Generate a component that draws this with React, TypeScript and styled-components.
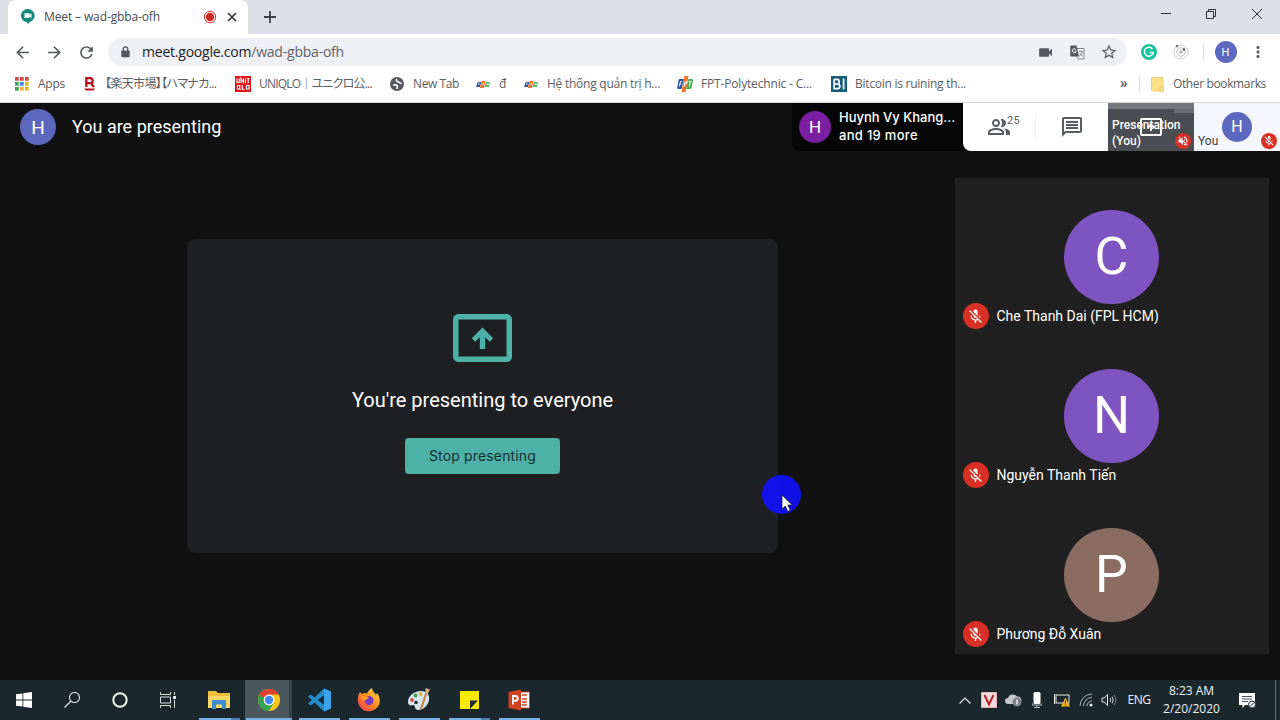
import React from 'react';
import styled, { createGlobalStyle } from 'styled-components';
import { MdOutlinePeopleAlt, MdOutlineMessage, MdMicOff, MdVolumeOff, MdVideocam, MdStarBorder, MdArrowBack, MdArrowForward, MdRefresh, MdMoreVert } from 'react-icons/md';

const Global = createGlobalStyle`
  * { box-sizing: border-box; }
  body { margin: 0; background: #111; overflow: hidden; }
  svg { display: block; flex: none; }
`;

const segoe = `"Open Sans", "Noto Sans", "Noto Sans CJK JP", sans-serif`;

const Screen = styled.div`
  width: 1280px; height: 720px; display: flex; flex-direction: column;
  position: relative; overflow: hidden; font-family: ${segoe};
`;

/* ---------- text ---------- */
const Text = styled.span<{ $ls?: number }>`
  white-space: nowrap; letter-spacing: ${p => p.$ls ?? 0}px;
`;
const TabTitle = styled(Text)`font-size: 12px; color: #45494d; margin-left: 9px; width: 159px; line-height: 16px;`;
const Url = styled(Text)`font-size: 14px; color: #5f6368; margin-left: 12px; line-height: 18px; b { font-weight: 400; color: #202124; }`;
const BookmarkLabel = styled(Text)`font-size: 12px; color: #5a5e62; line-height: 16px; font-feature-settings: "palt";`;
const HeaderTitle = styled(Text)`font: 400 18px/24px Roboto, sans-serif; color: #fff; margin-left: 16px; flex: 1;`;
const SpeakerLine = styled(Text)`font: 500 13px/18px Inter, sans-serif; color: #fff;`;
const CardTitle = styled(Text)`font: 400 20px/24px Roboto, sans-serif; color: #fff; margin-top: 26px;`;
const Name = styled(Text)`font: 400 14px/20px Roboto, sans-serif; color: #fff;`;
const TrayText = styled(Text)`font-size: 12px; line-height: 18px; color: #eef1f2;`;

/* ---------- browser ---------- */
const TabStrip = styled.div`
  height: 34px; background: #dcdfe6; display: flex; align-items: stretch; padding-left: 8px;
`;
const Tab = styled.div`
  width: 240px; background: #fff; border-radius: 8px 8px 0 0; display: flex; align-items: center;
  padding: 0 0 1px 13px;
`;
const TabClose = styled.div`margin-left: 10px;`;
const NewTab = styled.div`width: 44px; display: flex; align-items: center; justify-content: center; flex: none;`;
const WindowButtons = styled.div`margin-left: auto; display: flex; height: 28px;`;
const WindowButton = styled.div`width: 45.8px; display: flex; align-items: center; justify-content: center;`;

const Toolbar = styled.div`
  height: 36px; background: #fff; display: flex; align-items: center; padding-left: 6px; color: #54585c;
`;
const NavButton = styled.div`width: 32px; display: flex; justify-content: center;`;
const Omnibox = styled.div`
  margin-left: 6px; width: 1019px; height: 28px; border-radius: 14px; background: #eff0f3;
  display: flex; align-items: center; padding-left: 13px;
`;
const OmniActions = styled.div`margin-left: auto; display: flex; align-items: center; padding-right: 2px;`;
const OmniAction = styled.div`width: 32px; display: flex; justify-content: center;`;
const Extension = styled.div<{ $w: number }>`width: ${p => p.$w}px; display: flex; justify-content: center;`;
const Divider = styled.div<{ $h: number; $c?: string }>`width: 1px; height: ${p => p.$h}px; background: ${p => p.$c ?? '#d2d5d9'}; flex: none;`;

const Avatar = styled.div<{ $d: number; $bg: string; $fs: number }>`
  width: ${p => p.$d}px; height: ${p => p.$d}px; border-radius: 50%; background: ${p => p.$bg};
  color: #fff; font: 400 ${p => p.$fs}px/1 Roboto, sans-serif; flex: none;
  display: flex; align-items: center; justify-content: center;
`;

const Bookmarks = styled.div`
  height: 33px; background: #fff; border-bottom: 1px solid #d5d6d8; display: flex; align-items: center;
  padding: 0 0 4px 15px;
`;
const Bookmark = styled.div<{ $w: number }>`
  width: ${p => p.$w}px; height: 18px; display: flex; align-items: center; flex: none;
`;
const BookmarkIcon = styled.div<{ $w: number }>`width: ${p => p.$w}px; flex: none;`;
const More = styled.div`margin-left: auto; width: 19px; font-size: 14px; font-weight: 600; color: #55595d; line-height: 16px; padding-bottom: 3px;`;
const OtherBookmarks = styled.div`
  width: 141px; display: flex; align-items: center;
  ${Divider} { margin-right: 11px; }
`;

/* ---------- meeting ---------- */
const Meeting = styled.main`flex: 1; background: #111; display: flex; flex-direction: column;`;
const Header = styled.header`height: 48px; display: flex; align-items: center; padding-left: 20px;`;
const Speaker = styled.div`
  width: 179px; margin-right: -8px; height: 48px; background: #060606; border-radius: 0 0 0 8px;
  display: flex; align-items: center; padding-left: 7px; gap: 8px;
`;
const SpeakerText = styled.div`display: flex; flex-direction: column; padding-bottom: 3px;`;
const Panel = styled.div`
  width: 145px; height: 48px; background: #fff; border-radius: 0 0 0 8px; color: #5a5e63; display: flex; align-items: center;
`;
const PanelButton = styled.div<{ $shift?: number }>`
  width: 72px; display: flex; justify-content: center; align-items: center; padding-left: ${p => p.$shift ?? 0}px;
`;
const Count = styled(Text)`font: 400 11px/12px Roboto, sans-serif; align-self: flex-start; margin: 0 -4px 0 -4px;`;
const Tile = styled.div<{ $bg: string; $fg: string }>`
  width: 86px; height: 48px; background: ${p => p.$bg}; color: ${p => p.$fg};
  position: relative; display: flex; align-items: center; justify-content: center;
`;
const TileTop = styled.div`
  position: absolute; inset: 0 0 auto 0; height: 6px; background: #75777c;
  &::after { content: ''; position: absolute; right: 0; top: 6px; width: 20px; height: 4px; background: #6a6d72; }
`;
const TileLabel = styled(Text)<{ $bold?: boolean }>`
  position: absolute; left: 4px; bottom: 2px; font: ${p => (p.$bold ? 500 : 400)} 12px/16px Roboto, sans-serif; white-space: pre;
`;
const TileBadge = styled.div`position: absolute; right: 3px; bottom: 2px;`;
const Badge = styled.div<{ $d: number }>`
  width: ${p => p.$d}px; height: ${p => p.$d}px; border-radius: 50%; background: #d93025; color: #fff;
  display: flex; align-items: center; justify-content: center; flex: none;
`;

const Body = styled.div`flex: 1; display: flex; align-items: flex-start; padding-left: 187px;`;
const Card = styled.section`
  width: 591px; height: 314px; margin-top: 87.5px; background: #1f2023; border-radius: 8px;
  display: flex; flex-direction: column; align-items: center; padding-top: 75.5px;
`;
const StopButton = styled.button`
  width: 155px; height: 36px; margin-top: 26px; border: 0; border-radius: 4px; background: #4db1a7; color: #16302f;
  font: 400 14px/20px Inter, sans-serif; padding: 0; display: flex; align-items: center; justify-content: center;
`;
const People = styled.aside`
  width: 314px; height: 476px; margin: 27px 0 0 177px; background: #202020; display: flex; flex-direction: column;
`;
const Person = styled.div`
  height: 159px; flex: none; padding: 31.5px 1px 0 0; display: flex; flex-direction: column; align-items: center;
`;
const PersonRow = styled.div`
  align-self: stretch; display: flex; align-items: center; gap: 8px; padding-left: 7.5px; height: 26px; margin-top: -1px;
`;
const Pointer = styled.div`
  position: absolute; left: 762px; top: 475px; width: 39px; height: 39px; border-radius: 50%;
  background: rgba(17, 17, 255, .9);
  svg { position: absolute; left: 19px; top: 19px; }
`;

/* ---------- taskbar ---------- */
const Taskbar = styled.footer`height: 40px; background: #1a282d; display: flex; align-items: stretch;`;
const SystemButton = styled.div`width: 48px; display: flex; align-items: center; justify-content: center;`;
const Apps = styled.div`display: flex; margin-left: 2px;`;
const AppButton = styled.div<{ $active?: boolean; $stack?: boolean }>`
  width: 50px; display: flex; flex-direction: column; align-items: center; justify-content: space-between; padding-top: 8px;
  background: ${p => (p.$active ? 'linear-gradient(90deg,transparent 1px,#4b585d 1px,#4b585d 45px,#2d3b40 45px,#3c4a4f 48px,transparent 48px)' : 'none')};
  &::after {
    content: ''; width: ${p => (p.$active ? 46 : 41)}px; height: 2px;
    background: linear-gradient(90deg, #76b3ea ${p => (p.$stack ? '32px, #4e7fae 32px' : '100%')});
  }
`;
const Tray = styled.div`margin-left: auto; display: flex; align-items: center;`;
const TrayItem = styled.div<{ $w: number }>`width: ${p => p.$w}px; display: flex; justify-content: center;`;
const Notifications = styled(TrayItem)`padding-right: 8px;`;
const Clock = styled.div`width: 71px; display: flex; flex-direction: column; align-items: center; padding-bottom: 1px;`;
const ShowDesktop = styled.div`width: 5px; align-self: stretch; border-left: 1px solid #66757b;`;

const Fpt = () => (
  <svg width="14" height="7" viewBox="0 0 16 10" preserveAspectRatio="none">
    <path d="M2 1.5H6L4.5 8.5H0Z" fill="#2854a4" /><path d="M6.5 0H11L9 10H4.5Z" fill="#ef7128" /><path d="M11.5 1.5H16L14.5 8.5H10Z" fill="#45ad4b" />
    <path d="M2.6 3H4.6M2.2 5H4M7.5 3H9L8.6 5H7M12 7.5L13 3H14.2V5.4H13" stroke="#fff" strokeWidth=".8" fill="none" />
  </svg>
);

const FptLarge = () => (
  <svg width="16" height="16" viewBox="0 0 16 16">
    <path d="M2.500 3H7L4.500 13H1.500Q-.3 13 .3 11L1.500 4.500Q1.700 3 2.500 3Z" fill="#2854a4" />
    <path d="M11.500 3H15Q16.300 3 16 4.500L14.500 12Q14.200 13 13 13H9Z" fill="#45ad4b" />
    <path d="M7.500 0H11.500L8.500 16H4.500Z" fill="#ef7128" />
    <path d="M5 5.500H3.500L2.200 10.500M2.900 8H4.500M6.800 11L8.200 5.500H9.500L9 8H7.700M12.300 10.500L13.300 5.500M11.800 5.500H14.500" stroke="#fff" strokeWidth="1" fill="none" />
  </svg>
);

const Icons = {
  meet: <svg width="14" height="16" viewBox="0 0 14 16"><path d="M7 0a6.600 6.600 0 0 1 1.600 13L7 15.500 6.200 13.300A6.600 6.600 0 0 1 7 0Z" fill="#14897a" /><path d="M3.500 4.300H8.500V5.800L10.500 4.300V9L8.500 7.500V9H3.500Z" fill="#fff" /></svg>,
  lock: <svg width="9" height="12" viewBox="0 0 9 12"><path d="M2.200 5V3.200A2.300 2.300 0 0 1 6.800 3.200V5" fill="none" stroke="#54585c" strokeWidth="1.300" /><rect x=".3" y="4.500" width="8.400" height="6.800" rx="1" fill="#54585c" /></svg>,
  translate: <svg width="15" height="15" viewBox="0 0 15 15"><path d="M6 3.500H14V14H8L6.500 11.500" fill="#f7f8fa" stroke="#7b7f84" /><path d="M9 6.500H13M11 5.500V6.500M12.300 6.500C12 9 10.500 10.500 9 11.500M9.800 8L12.500 11.500" fill="none" stroke="#7b7f84" strokeWidth=".9" /><path d="M1 .5H6.500L9 11.500H1A.7 .7 0 0 1 .3 10.800V1.200A.7 .7 0 0 1 1 .5Z" fill="#55595d" /><path d="M5.800 4.500A2 2 0 1 0 6.200 6.200H4.500" fill="none" stroke="#fff" strokeWidth="1" /></svg>,
  apps: <svg width="14" height="14" viewBox="0 0 14 14">{['#d84a3d', '#d84a3d', '#d84a3d', '#3aa05a', '#3f86e0', '#e9b530', '#3aa05a', '#e9b530', '#e9b530'].map((c, i) => <rect key={i} x={(i % 3) * 5} y={Math.floor(i / 3) * 5} width="3.700" height="3.700" fill={c} />)}</svg>,
  rakuten: <svg width="12" height="14" viewBox="0 0 12 14"><path d="M2.300 10V1H5.500C9.500 1 9.500 5.600 7 6.300L10 10M2.300 6.200H6" fill="none" stroke="#b80f1b" strokeWidth="2.300" /><path d="M0 11.500H11L9.500 13.500H2Z" fill="#b80f1b" /></svg>,
  uniqlo: <svg width="16" height="16" viewBox="0 0 16 16"><rect width="16" height="16" fill="#e3151b" /><path d="M2 2.500V6.500H4.200V2.500M6 7V2.500L8.500 6.500V2.500M10.500 2.500V7M12 2.500H14.500M13.200 2.500V7M2.500 9.500H4.700V13H2.500ZM4 12L5.500 14M7.200 9V13.200H9.500M11.500 9.500H14V13H11.500Z" fill="none" stroke="#fff" strokeWidth="1.100" /></svg>,
  globe: <svg width="14" height="14" viewBox="0 0 14 14"><circle cx="7" cy="7" r="7" fill="#55595d" /><path d="M3 7.600C4.500 8.500 6 7.200 7.200 8.600C8 9.700 6.800 10.300 7 12M7 2.200C5.800 3.200 6.500 4.800 8.300 4.800C9.500 5 9.500 6.500 11.600 6.500" stroke="#fff" strokeWidth="1.600" fill="none" /></svg>,
  bi: <svg width="16" height="16" viewBox="0 0 16 16"><rect width="16" height="16" fill="#185f7d" /><path d="M3.200 3.300V12.700H6.500C9.600 12.700 9.600 8 6.500 8H3.500M3.200 3.300H6.200C8.800 3.300 8.800 8 6.200 8M12.600 2.500V13.500" fill="none" stroke="#fff" strokeWidth="1.700" /></svg>,
  folder: <svg width="13" height="15" viewBox="0 0 13 15"><path d="M1 .5H11A1 1 0 0 1 12 1.500V14H1.500A1 1 0 0 1 .5 13V1Z" fill="#fbe08a" stroke="#f1d375" /><rect x="9" y="10" width="3.500" height="4" fill="#fbe59b" stroke="#e7c34f" strokeWidth=".7" /></svg>,
};

const Cast = ({ w, h, s, c }: { w: number; h: number; s: number; c: string }) => (
  <svg width={w} height={h} viewBox={`0 0 ${w} ${h}`}>
    <rect x={s / 2} y={s / 2} width={w - s} height={h - s} rx={s / 2} fill="none" stroke={c} strokeWidth={s} />
    <path transform={`translate(${w / 2} ${h / 2}) scale(${w / 59})`} d="M0 -10.500L10.700 .3L7.200 3.800L2.700 -.7V11H-2.700V-.7L-7.200 3.800L-10.700 .3Z" fill={c} />
  </svg>
);

const people = [
  { initial: 'C', name: 'Che Thanh Dai (FPL HCM)', bg: '#7e55c0' },
  { initial: 'N', name: 'Nguyễn Thanh Tiến', bg: '#7e55c0' },
  { initial: 'P', name: 'Phương Đỗ Xuân', bg: '#8b6c62' },
];

const marks: { icon: React.ReactNode; iconWidth: number; label: string; width: number; ls: number }[] = [
  { icon: Icons.apps, iconWidth: 23, label: 'Apps', width: 69, ls: -0.25 },
  { icon: Icons.rakuten, iconWidth: 21, label: '【楽天市場】【ハマナカ...', width: 151, ls: -0.65 },
  { icon: Icons.uniqlo, iconWidth: 24, label: 'UNIQLO｜ユニクロ公...', width: 155, ls: -0.8 },
  { icon: Icons.globe, iconWidth: 23, label: 'New Tab', width: 86, ls: -0.4 },
  { icon: <Fpt />, iconWidth: 23, label: 'đ', width: 48, ls: 0 },
  { icon: <Fpt />, iconWidth: 23, label: 'Hệ thống quản trị h...', width: 153, ls: -0.25 },
  { icon: <FptLarge />, iconWidth: 24, label: 'FPT-Polytechnic - C...', width: 154, ls: -0.17 },
  { icon: Icons.bi, iconWidth: 24, label: 'Bitcoin is ruining th...', width: 140, ls: -0.26 },
];

const apps = [
  { art: <svg width="24" height="24" viewBox="0 0 24 24"><path d="M1 3H9L11 5H23V20H1Z" fill="#f3bd3c" /><path d="M1 8H23V20H1Z" fill="#fbd768" /><path d="M5 12H19V21H15V16.500H9V21H5Z" fill="#3e8ed0" /></svg>, stack: true },
  { active: true, art: <svg width="24" height="24" viewBox="0 0 24 24"><circle cx="12" cy="12" r="11" fill="#fbc91c" /><path d="M2.470 6.500A11 11 0 0 0 12 23L16.800 14.700L12 12Z" fill="#35a351" /><path d="M2.470 6.500A11 11 0 0 1 21.530 6.500H12L7.200 14.700Z" fill="#e23f30" /><path d="M2.470 6.500L7.200 14.700L9 11Z" fill="#35a351" /><circle cx="12" cy="12" r="5.400" fill="#fff" /><circle cx="12" cy="12" r="4.200" fill="#4286ef" /></svg> },
  { art: <svg width="24" height="24" viewBox="0 0 24 24"><path d="M17 .5L24 3.500V20.500L17 23.500L1 8.500L3.500 6.500L17.500 17V7L3.500 17.500L1 15.500Z" fill="#2489ca" /><path d="M17 .5L24 3.500V20.500L17 23.500Z" fill="#3ba4e8" /></svg> },
  { art: <svg width="24" height="24" viewBox="0 0 24 24"><defs><linearGradient id="fx" x1="1" y1="0" x2="0" y2="1"><stop offset="0" stopColor="#ffe44d" /><stop offset=".5" stopColor="#ff8a1c" /><stop offset="1" stopColor="#f0315f" /></linearGradient></defs><path d="M3 4L5 6C7 4.500 9 5 10 5.500C11 3 13 1 15 0C15 3 18 5 19 7L20 5C23 9 24 14 21 18.500C17 24.500 8 25 3.500 19.500C0 15 0 8 3 4Z" fill="url(#fx)" /><circle cx="12" cy="12.500" r="4.500" fill="#7a3bc4" /><path d="M4 9C7 7 9 8.500 12 9.500C10 12 7 12 6.500 14Z" fill="#ff9a1f" /></svg> },
  { art: <svg width="24" height="24" viewBox="0 0 24 24"><path d="M1 14C1 8 7 3 14 3C20 3 23 7 22 12C21 18 16 22 11 22C7 22 9 17 6 17C3 18 1 17 1 14Z" fill="#d5e6f2" /><circle cx="5" cy="12" r="1.900" fill="#d9483b" /><circle cx="8.500" cy="7.500" r="1.900" fill="#3f9e4c" /><circle cx="13.500" cy="6" r="1.900" fill="#e9b22c" /><circle cx="9" cy="14.500" r="1.800" fill="#1b2a30" /><path d="M20 3L14 21" stroke="#c98746" strokeWidth="2.200" /><path d="M18.500 0L23 1.500L20.500 6L18.500 5Z" fill="#dfb38b" /></svg> },
  { art: <svg width="24" height="24" viewBox="0 0 24 24"><path d="M3 3H22V21H3Z" fill="#fdea00" /><path d="M13 21V12.500H21Z" fill="#20292c" /></svg>, stack: true },
  { art: <svg width="24" height="24" viewBox="0 0 24 24"><rect x="12" y="4" width="10.500" height="16" fill="#fff" stroke="#d04424" strokeWidth="1" /><path d="M15 7H20M15 11H20M15 14H20M15 17H20" stroke="#d04424" strokeWidth="1.300" /><path d="M1.500 4L14 1.500V22.500L1.500 20Z" fill="#cf4121" /><path d="M6 16.500V8H8.300C11.500 8 11.500 12.800 8.300 12.800H6" stroke="#fff" strokeWidth="1.900" fill="none" /></svg> },
];

export default function App() {
  return (
    <Screen>
      <Global />
      <TabStrip>
        <Tab>
          {Icons.meet}
          <TabTitle $ls={-0.12}>Meet – wad-gbba-ofh</TabTitle>
          <svg width="14" height="14" viewBox="0 0 14 14"><circle cx="7" cy="7" r="5.700" fill="#fff" stroke="#d5342b" /><circle cx="7" cy="7" r="4.200" fill="#cf2a22" /></svg>
          <TabClose><svg width="10" height="10" viewBox="0 0 10 10"><path d="M1 1L9 9M9 1L1 9" stroke="#303235" strokeWidth="1.600" /></svg></TabClose>
        </Tab>
        <NewTab><svg width="12" height="12" viewBox="0 0 12 12"><path d="M6 0V12M0 6H12" stroke="#3c4043" strokeWidth="1.800" /></svg></NewTab>
        <WindowButtons>
          <WindowButton><svg width="10" height="10"><path d="M0 4.500H10" stroke="#2d2f33" /></svg></WindowButton>
          <WindowButton><svg width="10" height="10"><path d="M.5 2.500H7.500V9.500H.5ZM2.500 2.500V.5H9.500V7.500H7.500" fill="none" stroke="#2d2f33" /></svg></WindowButton>
          <WindowButton><svg width="10" height="10"><path d="M0 0L10 10M10 0L0 10" stroke="#2d2f33" /></svg></WindowButton>
        </WindowButtons>
      </TabStrip>
      <Toolbar>
        <NavButton><MdArrowBack size={19} /></NavButton>
        <NavButton><MdArrowForward size={19} /></NavButton>
        <NavButton><MdRefresh size={19} /></NavButton>
        <Omnibox>
          {Icons.lock}
          <Url $ls={-0.22}><b>meet.google.com</b>/wad-gbba-ofh</Url>
          <OmniActions>
            <OmniAction><MdVideocam size={17} /></OmniAction>
            <OmniAction>{Icons.translate}</OmniAction>
            <OmniAction><MdStarBorder size={18} /></OmniAction>
          </OmniActions>
        </Omnibox>
        <Extension $w={44}><svg width="16" height="16" viewBox="0 0 16 16"><circle cx="8" cy="8" r="8" fill="#15c39a" /><path d="M11.500 5A4.500 4.500 0 1 0 12 9.500M8.500 8.500H12V11" fill="none" stroke="#fff" strokeWidth="1.400" /></svg></Extension>
        <Extension $w={20}><svg width="16" height="16" viewBox="0 0 16 16"><circle cx="8" cy="8" r="7" fill="none" stroke="#ccc" /><circle cx="8" cy="8" r="4.200" fill="none" stroke="#bbb" /><circle cx="8" cy="8" r="2" fill="#c5c5c5" /><circle cx="4" cy="2" r="1.300" fill="#777" /><circle cx="11" cy="5.500" r="1.300" fill="#555" /></svg></Extension>
        <Extension $w={24}><Divider $h={16} /></Extension>
        <Extension $w={21}><Avatar $d={22} $bg="#5b68be" $fs={11}>H</Avatar></Extension>
        <Extension $w={43}><MdMoreVert size={18} /></Extension>
      </Toolbar>
      <Bookmarks>
        {marks.map((m, i) => (
          <Bookmark key={i} $w={m.width}>
            <BookmarkIcon $w={m.iconWidth}>{m.icon}</BookmarkIcon>
            <BookmarkLabel $ls={m.ls}>{m.label}</BookmarkLabel>
          </Bookmark>
        ))}
        <More>»</More>
        <OtherBookmarks>
          <Divider $h={16} />
          <BookmarkIcon $w={22}>{Icons.folder}</BookmarkIcon>
          <BookmarkLabel $ls={-0.37}>Other bookmarks</BookmarkLabel>
        </OtherBookmarks>
      </Bookmarks>
      <Meeting>
        <Header>
          <Avatar $d={36} $bg="#5b68be" $fs={19}>H</Avatar>
          <HeaderTitle>You are presenting</HeaderTitle>
          <Speaker>
            <Avatar $d={32} $bg="#7b1fa2" $fs={17}>H</Avatar>
            <SpeakerText>
              <SpeakerLine>Huynh Vy Khang...</SpeakerLine>
              <SpeakerLine $ls={0.3}>and 19 more</SpeakerLine>
            </SpeakerText>
          </Speaker>
          <Panel>
            <PanelButton $shift={5}><MdOutlinePeopleAlt size={24} /><Count $ls={0.3}>25</Count></PanelButton>
            <Divider $h={24} $c="#f0f0f0" />
            <PanelButton><MdOutlineMessage size={24} /></PanelButton>
          </Panel>
          <Tile $bg="#4a4d51" $fg="#fff">
            <TileTop />
            <Cast w={22} h={18} s={2} c="#fff" />
            <TileLabel $bold>{'Presentation\n(You)'}</TileLabel>
            <TileBadge><Badge $d={16}><MdVolumeOff size={12} /></Badge></TileBadge>
          </Tile>
          <Tile $bg="#f5f7fc" $fg="#3c4043">
            <Avatar $d={30} $bg="#5b68be" $fs={16}>H</Avatar>
            <TileLabel>You</TileLabel>
            <TileBadge><Badge $d={16}><MdMicOff size={12} /></Badge></TileBadge>
          </Tile>
        </Header>
        <Body>
          <Card>
            <Cast w={59} h={48} s={5.5} c="#4db1a7" />
            <CardTitle>You're presenting to everyone</CardTitle>
            <StopButton><Text $ls={0.15}>Stop presenting</Text></StopButton>
          </Card>
          <People>
            {people.map(p => (
              <Person key={p.name}>
                <Avatar $d={94.5} $bg={p.bg} $fs={52}>{p.initial}</Avatar>
                <PersonRow>
                  <Badge $d={26}><MdMicOff size={17} /></Badge>
                  <Name>{p.name}</Name>
                </PersonRow>
              </Person>
            ))}
          </People>
        </Body>
      </Meeting>
      <Taskbar>
        <SystemButton><svg width="16" height="16" viewBox="0 0 16 16"><path d="M0 2.300L6.500 1.400V7.600H0ZM7.300 1.300L16 0V7.600H7.300ZM0 8.400H6.500V14.600L0 13.700ZM7.300 8.400H16V16L7.300 14.700Z" fill="#fff" /></svg></SystemButton>
        <SystemButton><svg width="16" height="16" viewBox="0 0 16 16"><circle cx="10.500" cy="5.500" r="5" fill="none" stroke="#dfe3e5" strokeWidth="1.100" /><path d="M7 9L.5 15.500" stroke="#dfe3e5" strokeWidth="1.300" /></svg></SystemButton>
        <SystemButton><svg width="16" height="16" viewBox="0 0 16 16"><circle cx="8" cy="8" r="6.700" fill="none" stroke="#f1f3f4" strokeWidth="2" /></svg></SystemButton>
        <SystemButton><svg width="16" height="16" viewBox="0 0 16 16"><path d="M.5 0V2.500H10.500V0M.5 5H10.500V11H.5ZM.5 16V13.500H10.500V16M14.500 0V3M14.500 8V16" fill="none" stroke="#d5dadd" /><rect x="13" y="4" width="3" height="3" fill="#e8ebec" /></svg></SystemButton>
        <Apps>
          {apps.map((a, i) => <AppButton key={i} $active={a.active} $stack={a.stack}>{a.art}</AppButton>)}
        </Apps>
        <Tray>
          <TrayItem $w={28}><svg width="12" height="7" viewBox="0 0 12 7"><path d="M.5 6.500L6 1L11.500 6.500" fill="none" stroke="#e8ebec" strokeWidth="1.200" /></svg></TrayItem>
          <TrayItem $w={20}><svg width="16" height="16" viewBox="0 0 16 16"><rect width="16" height="16" fill="#f5dcdc" stroke="#d98c8c" /><path d="M3.500 3L8 12.500L12.500 3" fill="none" stroke="#b5252b" strokeWidth="2" /></svg></TrayItem>
          <TrayItem $w={28}><svg width="17" height="14" viewBox="0 0 17 14"><path d="M3 11A3 3 0 0 1 3 5A5 4.500 0 0 1 12 3.500A3.500 3.500 0 0 1 13 11Z" fill="#c3c8ca" /><circle cx="12" cy="9" r="4.500" fill="#7c8386" /><path d="M12 6.500V11.500" stroke="#fff" strokeWidth="1.300" /></svg></TrayItem>
          <TrayItem $w={20}><svg width="10" height="16" viewBox="0 0 10 16"><rect x="1.500" y="0" width="7" height="12" rx="1.500" fill="#fff" /><path d="M0 11V13H10V11M5 13V16M2 15.500H8" stroke="#b9c0c3" fill="none" /></svg></TrayItem>
          <TrayItem $w={29}><svg width="16" height="14" viewBox="0 0 16 14"><rect x="2" y="2" width="13" height="8" fill="none" stroke="#e8ebec" /><path d="M.5 1V11" stroke="#e8ebec" /><path d="M11.500 4.500L16 13.500H7Z" fill="#f6b91d" /><path d="M11.500 7.500V10.500M11.500 11.500V12.500" stroke="#222" /></svg></TrayItem>
          <TrayItem $w={20}><svg width="14" height="14" viewBox="0 0 14 14"><g fill="none" stroke="#aeb6b9"><path d="M1 13A12 12 0 0 1 13 1" /><path d="M4.500 13A8.500 8.500 0 0 1 13 4.500" /><path d="M8 13A5 5 0 0 1 13 8" /></g><circle cx="12" cy="12" r="1.500" fill="#fff" /></svg></TrayItem>
          <TrayItem $w={26}><svg width="16" height="14" viewBox="0 0 16 14"><path d="M1 5H3.500L6.500 1.500V12.500L3.500 9H1Z" fill="none" stroke="#e8ebec" /><path d="M9 5Q10.500 7 9 9M11 3.500Q13.500 7 11 10.500" fill="none" stroke="#d0d5d7" /><path d="M13 2Q17 7 13 12" fill="none" stroke="#7d888c" /></svg></TrayItem>
          <TrayItem $w={34}><TrayText $ls={-0.5}>ENG</TrayText></TrayItem>
          <Clock><TrayText>8:23 AM</TrayText><TrayText>2/20/2020</TrayText></Clock>
          <Notifications $w={48}><svg width="17" height="17" viewBox="0 0 17 17"><path d="M0 1H16V13H6L3.500 16V13H0Z" fill="#fff" /><path d="M3 4.500H13M3 7H13M3 9.500H9" stroke="#4a5559" /><circle cx="13" cy="12.500" r="3.500" fill="#e8ebec" stroke="#26343a" /><path d="M11 14.500L15 10.500" stroke="#26343a" /></svg></Notifications>
          <ShowDesktop />
        </Tray>
      </Taskbar>
      <Pointer><svg width="13" height="19" viewBox="0 0 13 19"><path d="M1 1V15L4.300 12L6.800 17.500L9.300 16.300L6.800 11H11.300Z" fill="#fff" stroke="#111" strokeWidth=".7" /></svg></Pointer>
    </Screen>
  );
}
